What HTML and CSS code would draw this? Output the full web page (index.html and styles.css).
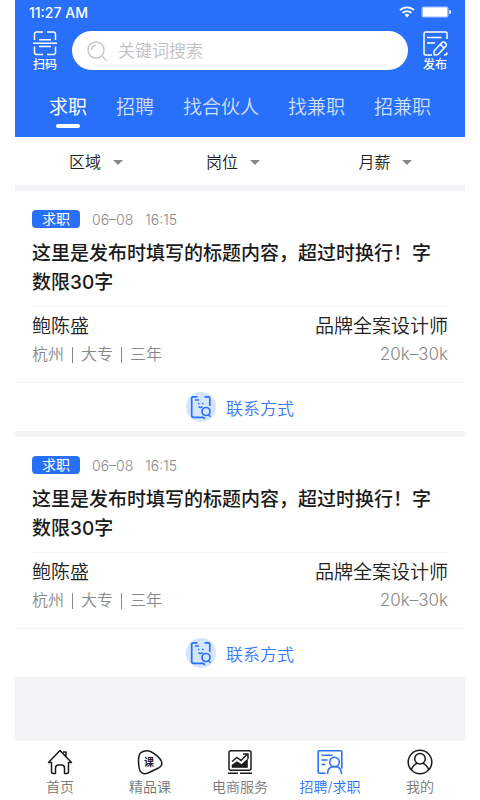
FILE: index.html
```html
<!DOCTYPE html>
<html lang="zh-CN">
<head>
<meta charset="utf-8">
<meta name="viewport" content="width=device-width, initial-scale=1">
<title>招聘/求职</title>
<link rel="stylesheet" href="styles.css">
</head>
<body>
<div class="app">
  <header class="header">
    <div class="status">
      <span>11:27 AM</span>
      <span class="status-icons">
        <svg width="16" height="12" viewBox="0 0 16 12" fill="none" stroke="#fff" stroke-width="1.8"><path d="M1 4.2a10 10 0 0 1 14 0M3.6 7a6.2 6.2 0 0 1 8.800 0"/><path d="M8 11.500 5.600 9a3.400 3.400 0 0 1 4.800 0z" fill="#fff" stroke="none"/></svg>
        <svg width="30" height="12" viewBox="0 0 30 12"><rect x=".5" y=".5" width="27" height="11" rx="2" fill="#9fc0ff"/><rect x="2" y="1.500" width="24" height="9" rx="1" fill="#fff"/><path d="M28.300 4a2 2 0 0 1 0 4z" fill="#fff"/></svg>
      </span>
    </div>
    <div class="search-row">
      <button class="tool" type="button">
        <svg width="24" height="25" viewBox="0 0 24 25" fill="none" stroke="#fff" stroke-width="1.500"><path d="M1.500 9V3a2 2 0 0 1 2-2H10M14 1h6.500a2 2 0 0 1 2 2v6M6 8.700h12M0 12.200h24M6 15.500h12M1.500 15.500v6a2 2 0 0 0 2 2H10M14 23.500h6.500a2 2 0 0 0 2-2v-6"/></svg>
        <span>扫码</span>
      </button>
      <label class="search">
        <svg width="20" height="20" viewBox="0 0 20 20" fill="none" stroke="#c4c4c4" stroke-width="1.400"><circle cx="9" cy="9" r="8"/><path d="m15 15 4.500 4.500M4.500 9A4.500 4.500 0 0 1 9 4.500"/></svg>
        <input type="search" placeholder="关键词搜索" aria-label="关键词搜索">
      </label>
      <button class="tool" type="button">
        <svg width="25" height="25" viewBox="0 0 25 25" fill="none" stroke="#fff" stroke-width="1.500" stroke-linejoin="round"><path d="M24 8V2.500A1.500 1.500 0 0 0 22.500 1h-20A1.500 1.500 0 0 0 1 2.500v20A1.500 1.500 0 0 0 2.500 24H9M4 6.500h14.500M4 12h8M21 24h.5a2.500 2.500 0 0 0 2.500-2.500"/><path d="M11 24v-4l8-8.500q1.500-1.200 3 .2l.7.7q1.300 1.300.1 2.800L15 23.500zM17.500 13.500l3.500 3.500"/></svg>
        <span>发布</span>
      </button>
    </div>
    <nav class="tabs">
      <a class="tab tab-active" href="#">求职</a>
      <a class="tab" href="#">招聘</a>
      <a class="tab" href="#">找合伙人</a>
      <a class="tab" href="#">找兼职</a>
      <a class="tab" href="#">招兼职</a>
    </nav>
  </header>

  <div class="filters">
    <label class="filter"><select aria-label="区域"><option>区域</option></select><svg width="10" height="5" viewBox="0 0 10 5"><path d="M0 0h10L5 5z" fill="#888"/></svg></label>
    <label class="filter"><select aria-label="岗位"><option>岗位</option></select><svg width="10" height="5" viewBox="0 0 10 5"><path d="M0 0h10L5 5z" fill="#888"/></svg></label>
    <label class="filter"><select aria-label="月薪"><option>月薪</option></select><svg width="10" height="5" viewBox="0 0 10 5"><path d="M0 0h10L5 5z" fill="#888"/></svg></label>
  </div>

  <main class="list">
    <article class="card">
      <div class="card-head">
        <div class="tag-row"><span class="tag">求职</span><time>06–08</time><time>16:15</time></div>
        <h2>这里是发布时填写的标题内容，超过时换行！字数限30字</h2>
      </div>
      <div class="person">
        <div class="person-row"><span>鲍陈盛</span><span>品牌全案设计师</span></div>
        <div class="person-row person-meta"><span class="facts"><span>杭州</span><i></i><span>大专</span><i></i><span>三年</span></span><span class="salary">20k–30k</span></div>
      </div>
      <a class="contact" href="#">
        <svg width="30" height="30" viewBox="0 0 30 30" fill="none" stroke="#2a6ffa" stroke-width="1.700"><circle cx="15" cy="15" r="15" fill="#d5e5ff" stroke="none"/><path d="M11.500 4.800H7A1.300 1.300 0 0 0 5.700 6v17.500A1.800 1.800 0 0 0 7.500 25.300H17l2 1.500M18.500 4.800h4A1.300 1.300 0 0 1 23.800 6v8M9 8h4"/><circle cx="20" cy="19.500" r="4"/><path d="m22.500 22.500 2 2.500M12 11.500h1.500M16 11.500h1.500M12.500 14.500q2 2 4 0" stroke-width="1.400"/></svg>
        <span>联系方式</span>
      </a>
    </article>
    <article class="card">
      <div class="card-head">
        <div class="tag-row"><span class="tag">求职</span><time>06–08</time><time>16:15</time></div>
        <h2>这里是发布时填写的标题内容，超过时换行！字数限30字</h2>
      </div>
      <div class="person">
        <div class="person-row"><span>鲍陈盛</span><span>品牌全案设计师</span></div>
        <div class="person-row person-meta"><span class="facts"><span>杭州</span><i></i><span>大专</span><i></i><span>三年</span></span><span class="salary">20k–30k</span></div>
      </div>
      <a class="contact" href="#">
        <svg width="30" height="30" viewBox="0 0 30 30" fill="none" stroke="#2a6ffa" stroke-width="1.700"><circle cx="15" cy="15" r="15" fill="#d5e5ff" stroke="none"/><path d="M11.500 4.800H7A1.300 1.300 0 0 0 5.700 6v17.500A1.800 1.800 0 0 0 7.500 25.300H17l2 1.500M18.500 4.800h4A1.300 1.300 0 0 1 23.800 6v8M9 8h4"/><circle cx="20" cy="19.500" r="4"/><path d="m22.500 22.500 2 2.500M12 11.500h1.500M16 11.500h1.500M12.500 14.500q2 2 4 0" stroke-width="1.400"/></svg>
        <span>联系方式</span>
      </a>
    </article>
  </main>

  <nav class="bottom">
    <a href="#">
      <svg width="26" height="26" viewBox="0 0 26 26" fill="none" stroke="#1c1c1c" stroke-width="1.500" stroke-linejoin="round"><path d="M4.500 13.500H1.500L13 1.500l11.500 12h-3V23q0 1.500-1.500 1.500h-2.500V19q0-3-3-3h-3q-3 0-3 3v5.500H6Q4.500 24.500 4.500 23zM16 3h3v4.500"/></svg>
      <span>首页</span>
    </a>
    <a href="#">
      <svg width="26" height="26" viewBox="0 0 26 26"><path d="M4 3.500Q9 .5 14.500 3 21 6.500 24 11.500q2.500 5-2.500 7.500-5 2.500-11 5.200-6.500 1.800-8-3.700Q.8 13 2 7q.5-2.500 2-3.500z" fill="none" stroke="#1c1c1c" stroke-width="1.500"/><text x="12" y="17" text-anchor="middle" class="glyph">课</text></svg>
      <span>精品课</span>
    </a>
    <a href="#">
      <svg width="26" height="26" viewBox="0 0 26 26" fill="none" stroke="#1c1c1c" stroke-width="1.500"><rect x="2" y="1.800" width="22" height="19.500" rx="2"/><path d="M1 24.300h10M13 24.300h12"/><path d="m5 12.500 5-4 4 3 6-6M16 5h5v5"/><path d="M5 18.500v-2.500l5-3.500 4.500 3 6-5.500v8.500z" fill="#1c1c1c" stroke-width=".6"/></svg>
      <span>电商服务</span>
    </a>
    <a class="current" href="#">
      <svg width="26" height="26" viewBox="0 0 26 26" fill="none" stroke="#2a6ffa" stroke-width="1.600"><path d="M8.500 24.200h-6A1.300 1.300 0 0 1 1.200 23V3a1.300 1.300 0 0 1 1.300-1.300h21A1.300 1.300 0 0 1 24.800 3v16.500M4.500 6.200h11M4.500 11h6M4.500 15.500h4M10.500 25q0-7.500 7-7.500t7 7.500"/><circle cx="17.500" cy="13" r="4.800"/></svg>
      <span>招聘/求职</span>
    </a>
    <a href="#">
      <svg width="26" height="26" viewBox="0 0 26 26" fill="none" stroke="#1c1c1c" stroke-width="1.500"><circle cx="13" cy="13" r="11.800"/><circle cx="13" cy="9.800" r="5.300"/><path d="M4.300 20.800q2-5.200 6-6.500M15.700 14.300q4 1.300 6 6.500"/></svg>
      <span>我的</span>
    </a>
  </nav>
</div>
</body>
</html>
```
FILE: styles.css
```css
* { box-sizing: border-box; }

body {
  margin: 0;
  background: #fff;
  color: #222;
  font-family: Inter, "Noto Sans CJK SC", sans-serif;
  font-weight: 350;
}

a { color: inherit; text-decoration: none; }
svg { display: block; flex: none; }

button, input, select {
  appearance: none;
  border: 0;
  padding: 0;
  background: none;
  color: inherit;
  font: inherit;
}

.app {
  display: flex;
  flex-direction: column;
  min-height: 100vh;
  margin: 0 15px;
  background: #f2f3f5;
}

.header {
  background: #2870fa;
  color: #fff;
  padding-bottom: 9px;
}

.status {
  display: flex;
  justify-content: space-between;
  align-items: center;
  height: 24px;
  padding: 0 14px;
  font-size: 14px;
  font-weight: 500;
}

.status-icons { display: flex; gap: 6px; }

.search-row {
  display: flex;
  align-items: flex-start;
  gap: 14px;
  margin-top: 7px;
  padding: 0 17px;
}

.tool {
  display: flex;
  flex-direction: column;
  align-items: center;
  width: 26px;
  font-size: 12px;
  line-height: 18px;
  font-weight: 500;
  white-space: nowrap;
}

.search {
  display: flex;
  align-items: center;
  gap: 11px;
  flex: 1;
  height: 39px;
  padding: 0 15px;
  border-radius: 20px;
  background: #fff;
}

.search input {
  flex: 1;
  min-width: 0;
  font-size: 17px;
  outline: none;
  color: #222;
}

.search input::placeholder { color: #c0c0c0; opacity: 1; }

.tabs {
  display: flex;
  justify-content: space-between;
  margin-top: 20px;
  padding: 0 34px;
  font-size: 19px;
  line-height: 28px;
  color: #cfdfff;
}

.tab {
  display: flex;
  flex-direction: column;
  align-items: center;
  gap: 2px;
}

.tab::after {
  content: "";
  width: 24px;
  height: 4px;
  border-radius: 2px;
}

.tab-active { color: #fff; font-weight: 400; }
.tab-active::after { background: #fff; }

.filters {
  display: grid;
  grid-template-columns: 9fr 10fr 7fr;
  height: 48px;
  padding: 2px 0 0 54px;
  background: #fff;
  font-size: 16px;
}

.filter { display: flex; align-items: center; gap: 11px; }

.list {
  display: flex;
  flex-direction: column;
  gap: 6px;
  flex: 1;
  padding: 6px 0;
}

.card { background: #fff; }
.card-head { padding: 19px 17px 9px; }

.tag-row {
  display: flex;
  align-items: center;
  gap: 12px;
  height: 18px;
  font-size: 14px;
  color: #888;
}

.tag {
  width: 48px;
  border-radius: 4px;
  background: #2870fa;
  color: #fff;
  font-size: 14px;
  line-height: 18px;
  font-weight: 400;
  text-align: center;
}

h2 {
  margin: 11px 0 0;
  font-size: 19px;
  line-height: 29px;
  font-weight: 500;
  color: #1a1a1a;
}

.person {
  margin: 0 17px;
  padding: 6px 0 14px;
  border-top: 1px solid #f5f6f7;
}

.person-row {
  display: flex;
  justify-content: space-between;
  align-items: center;
  font-size: 19px;
  line-height: 28px;
}

.person-row.person-meta {
  font-size: 16px;
  line-height: 27px;
  color: #888;
}

.salary { font-size: 17px; }

.facts { display: flex; align-items: center; gap: 8px; }
.facts i { width: 1px; height: 16px; background: #888; }

.contact {
  display: flex;
  align-items: center;
  justify-content: center;
  gap: 10px;
  height: 49px;
  border-top: 1px solid #f5f6f7;
  color: #3a79f9;
  font-size: 17px;
}

.bottom {
  display: grid;
  grid-template-columns: repeat(5, 1fr);
  height: 59px;
  padding-top: 8px;
  background: #fff;
  color: #777;
  font-size: 14px;
  line-height: 24px;
}

.bottom a {
  display: flex;
  flex-direction: column;
  align-items: center;
  white-space: nowrap;
}

.bottom .current { color: #2a6ffa; }

.glyph { font-size: 10px; font-weight: 700; fill: #1c1c1c; }
```
